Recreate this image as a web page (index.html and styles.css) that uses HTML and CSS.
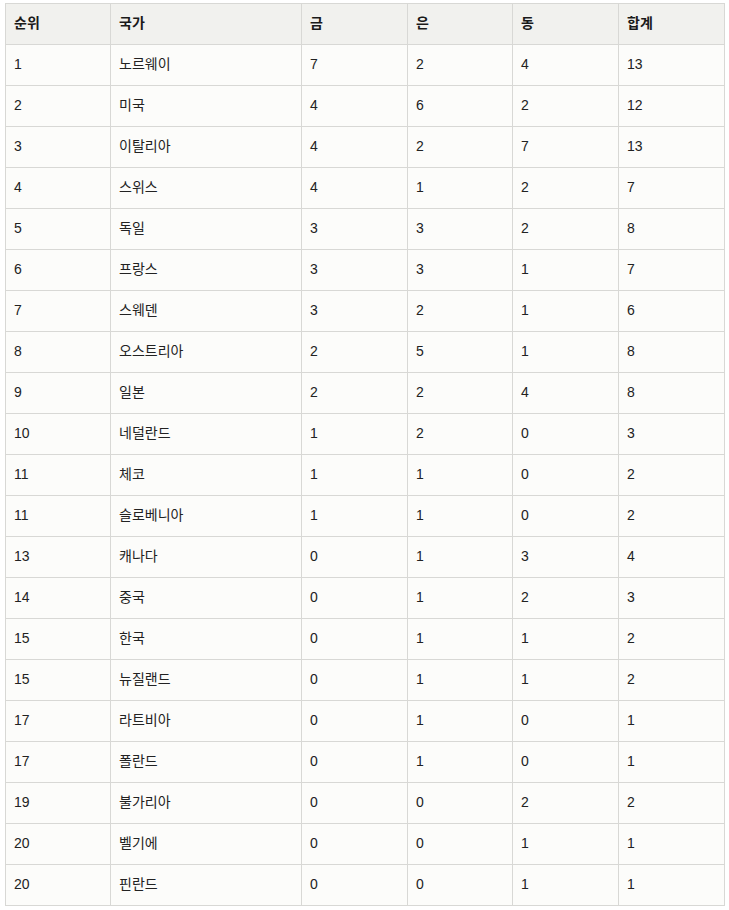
FILE: index.html
```html
<!DOCTYPE html>
<html lang="ko">
<head>
<meta charset="utf-8">
<link rel="stylesheet" href="styles.css">
</head>
<body>
<table class="medals">
<colgroup>
<col class="c1"><col class="c2"><col class="c3"><col class="c4"><col class="c5"><col class="c6">
</colgroup>
<thead>
<tr><th>순위</th><th>국가</th><th>금</th><th>은</th><th>동</th><th>합계</th></tr>
</thead>
<tbody>
<tr><td>1</td><td>노르웨이</td><td>7</td><td>2</td><td>4</td><td>13</td></tr>
<tr><td>2</td><td>미국</td><td>4</td><td>6</td><td>2</td><td>12</td></tr>
<tr><td>3</td><td>이탈리아</td><td>4</td><td>2</td><td>7</td><td>13</td></tr>
<tr><td>4</td><td>스위스</td><td>4</td><td>1</td><td>2</td><td>7</td></tr>
<tr><td>5</td><td>독일</td><td>3</td><td>3</td><td>2</td><td>8</td></tr>
<tr><td>6</td><td>프랑스</td><td>3</td><td>3</td><td>1</td><td>7</td></tr>
<tr><td>7</td><td>스웨덴</td><td>3</td><td>2</td><td>1</td><td>6</td></tr>
<tr><td>8</td><td>오스트리아</td><td>2</td><td>5</td><td>1</td><td>8</td></tr>
<tr><td>9</td><td>일본</td><td>2</td><td>2</td><td>4</td><td>8</td></tr>
<tr><td>10</td><td>네덜란드</td><td>1</td><td>2</td><td>0</td><td>3</td></tr>
<tr><td>11</td><td>체코</td><td>1</td><td>1</td><td>0</td><td>2</td></tr>
<tr><td>11</td><td>슬로베니아</td><td>1</td><td>1</td><td>0</td><td>2</td></tr>
<tr><td>13</td><td>캐나다</td><td>0</td><td>1</td><td>3</td><td>4</td></tr>
<tr><td>14</td><td>중국</td><td>0</td><td>1</td><td>2</td><td>3</td></tr>
<tr><td>15</td><td>한국</td><td>0</td><td>1</td><td>1</td><td>2</td></tr>
<tr><td>15</td><td>뉴질랜드</td><td>0</td><td>1</td><td>1</td><td>2</td></tr>
<tr><td>17</td><td>라트비아</td><td>0</td><td>1</td><td>0</td><td>1</td></tr>
<tr><td>17</td><td>폴란드</td><td>0</td><td>1</td><td>0</td><td>1</td></tr>
<tr><td>19</td><td>불가리아</td><td>0</td><td>0</td><td>2</td><td>2</td></tr>
<tr><td>20</td><td>벨기에</td><td>0</td><td>0</td><td>1</td><td>1</td></tr>
<tr><td>20</td><td>핀란드</td><td>0</td><td>0</td><td>1</td><td>1</td></tr>
</tbody>
</table>
</body>
</html>
```
FILE: styles.css
```css
html, body {
  background: #ffffff;
}
body {
  margin: 3px 0 0 5px;
  font-family: "Liberation Sans", "Noto Sans CJK KR", sans-serif;
  font-size: 14px;
  color: #222222;
}
.medals {
  border-collapse: collapse;
  width: 719px;
  table-layout: fixed;
  background: #fcfcfa;
}
.c1 { width: 105px; }
.c2 { width: 191px; }
.c3 { width: 106px; }
.c4 { width: 105px; }
.c5 { width: 106px; }
.c6 { width: 106px; }
.medals th,
.medals td {
  border: 1px solid #d8d8d5;
  padding: 9px 8px 11px;
  line-height: 20px;
  text-align: left;
  vertical-align: middle;
}
.medals th {
  background: #f1f1ee;
  font-weight: 700;
  color: #1a1a1a;
}
```
